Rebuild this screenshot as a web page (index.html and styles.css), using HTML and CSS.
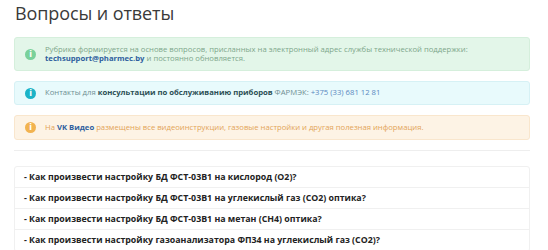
FILE: index.html
```html
<!DOCTYPE html>
<html>
<head>
    <title>Вопросы и ответы</title>
    <link rel="stylesheet" href="styles.css">
</head>
<body>
    <div class="page">
        <h1>Вопросы и ответы</h1>

        <div class="alert alert-green">
            <span class="alert-icon">i</span>
            <p>Рубрика формируется на основе вопросов, присланных на электронный адрес службы технической поддержки:<br>
            <a href="#">techsupport@pharmec.by</a> и постоянно обновляется.</p>
        </div>

        <div class="alert alert-blue">
            <span class="alert-icon">i</span>
            <p>Контакты для <b>консультации по обслуживанию приборов</b> ФАРМЭК: <a class="phone" href="#">+375 (33) 681 12 81</a></p>
        </div>

        <div class="alert alert-orange">
            <span class="alert-icon">i</span>
            <p>На <a href="#">VK Видео</a> размещены все видеоинструкции, газовые настройки и другая полезная информация.</p>
        </div>

        <hr>

        <ul class="faq">
            <li>- Как произвести настройку БД ФСТ-03В1 на кислород (О2)?</li>
            <li>- Как произвести настройку БД ФСТ-03В1 на углекислый газ (СО2) оптика?</li>
            <li>- Как произвести настройку БД ФСТ-03В1 на метан (СН4) оптика?</li>
            <li>- Как произвести настройку газоанализатора ФП34 на углекислый газ (СО2)?</li>
        </ul>
    </div>
</body>
</html>
```

FILE: styles.css
```css
body {
    margin: 0;
    font-family: "Open Sans", Arial, sans-serif;
    background: #fff;
    color: #333;
}
.page {
    width: 516px;
    padding: 0 14px;
}
h1 {
    margin: 0;
    padding: 1px 0 0 1px;
    font-size: 18px;
    font-weight: 400;
    line-height: 24px;
    color: #3a3a3a;
    letter-spacing: -0.1px;
}
.alert {
    display: flex;
    align-items: center;
    gap: 9px;
    border: 1px solid;
    border-radius: 3px;
    padding: 0 10px;
    font-size: 7.7px;
    line-height: 9.5px;
}
.alert p {
    margin: 0;
}
.alert a {
    color: #2f5f9e;
    font-weight: 700;
    text-decoration: none;
}
.alert a.phone {
    font-weight: 400;
    color: #5a88c0;
}
.alert-icon {
    flex: none;
    width: 11px;
    height: 11px;
    border-radius: 50%;
    color: #fff;
    font-family: "DejaVu Sans", sans-serif;
    font-weight: 700;
    font-size: 8px;
    line-height: 11px;
    text-align: center;
}
.alert-green {
    margin-top: 12px;
    height: 32px;
    background: #e3f6e9;
    border-color: #d5efdc;
    color: #7ea68b;
}
.alert-green .alert-icon {
    background: #79d19b;
}
.alert-blue {
    margin-top: 10px;
    height: 22px;
    background: #e8fafc;
    border-color: #d6f1f5;
    color: #6f8f93;
}
.alert-blue b {
    color: #2c4f55;
}
.alert-blue .alert-icon {
    background: #1bb3c7;
}
.alert-orange {
    margin-top: 10px;
    height: 23px;
    background: #fdf3e5;
    border-color: #f9e6cd;
    color: #e3a458;
}
.alert-orange .alert-icon {
    background: #f2b350;
}
hr {
    margin: 10px 0 0;
    border: 0;
    border-top: 1px solid #eeeeee;
}
.faq {
    list-style: none;
    margin: 15px 0 0;
    padding: 0;
    border: 1px solid #f0f0f0;
    border-radius: 3px;
}
.faq li {
    height: 20px;
    line-height: 20px;
    padding: 0 9px;
    font-size: 8.8px;
    font-weight: 700;
    color: #222;
    border-bottom: 1px solid #f0f0f0;
}
```
